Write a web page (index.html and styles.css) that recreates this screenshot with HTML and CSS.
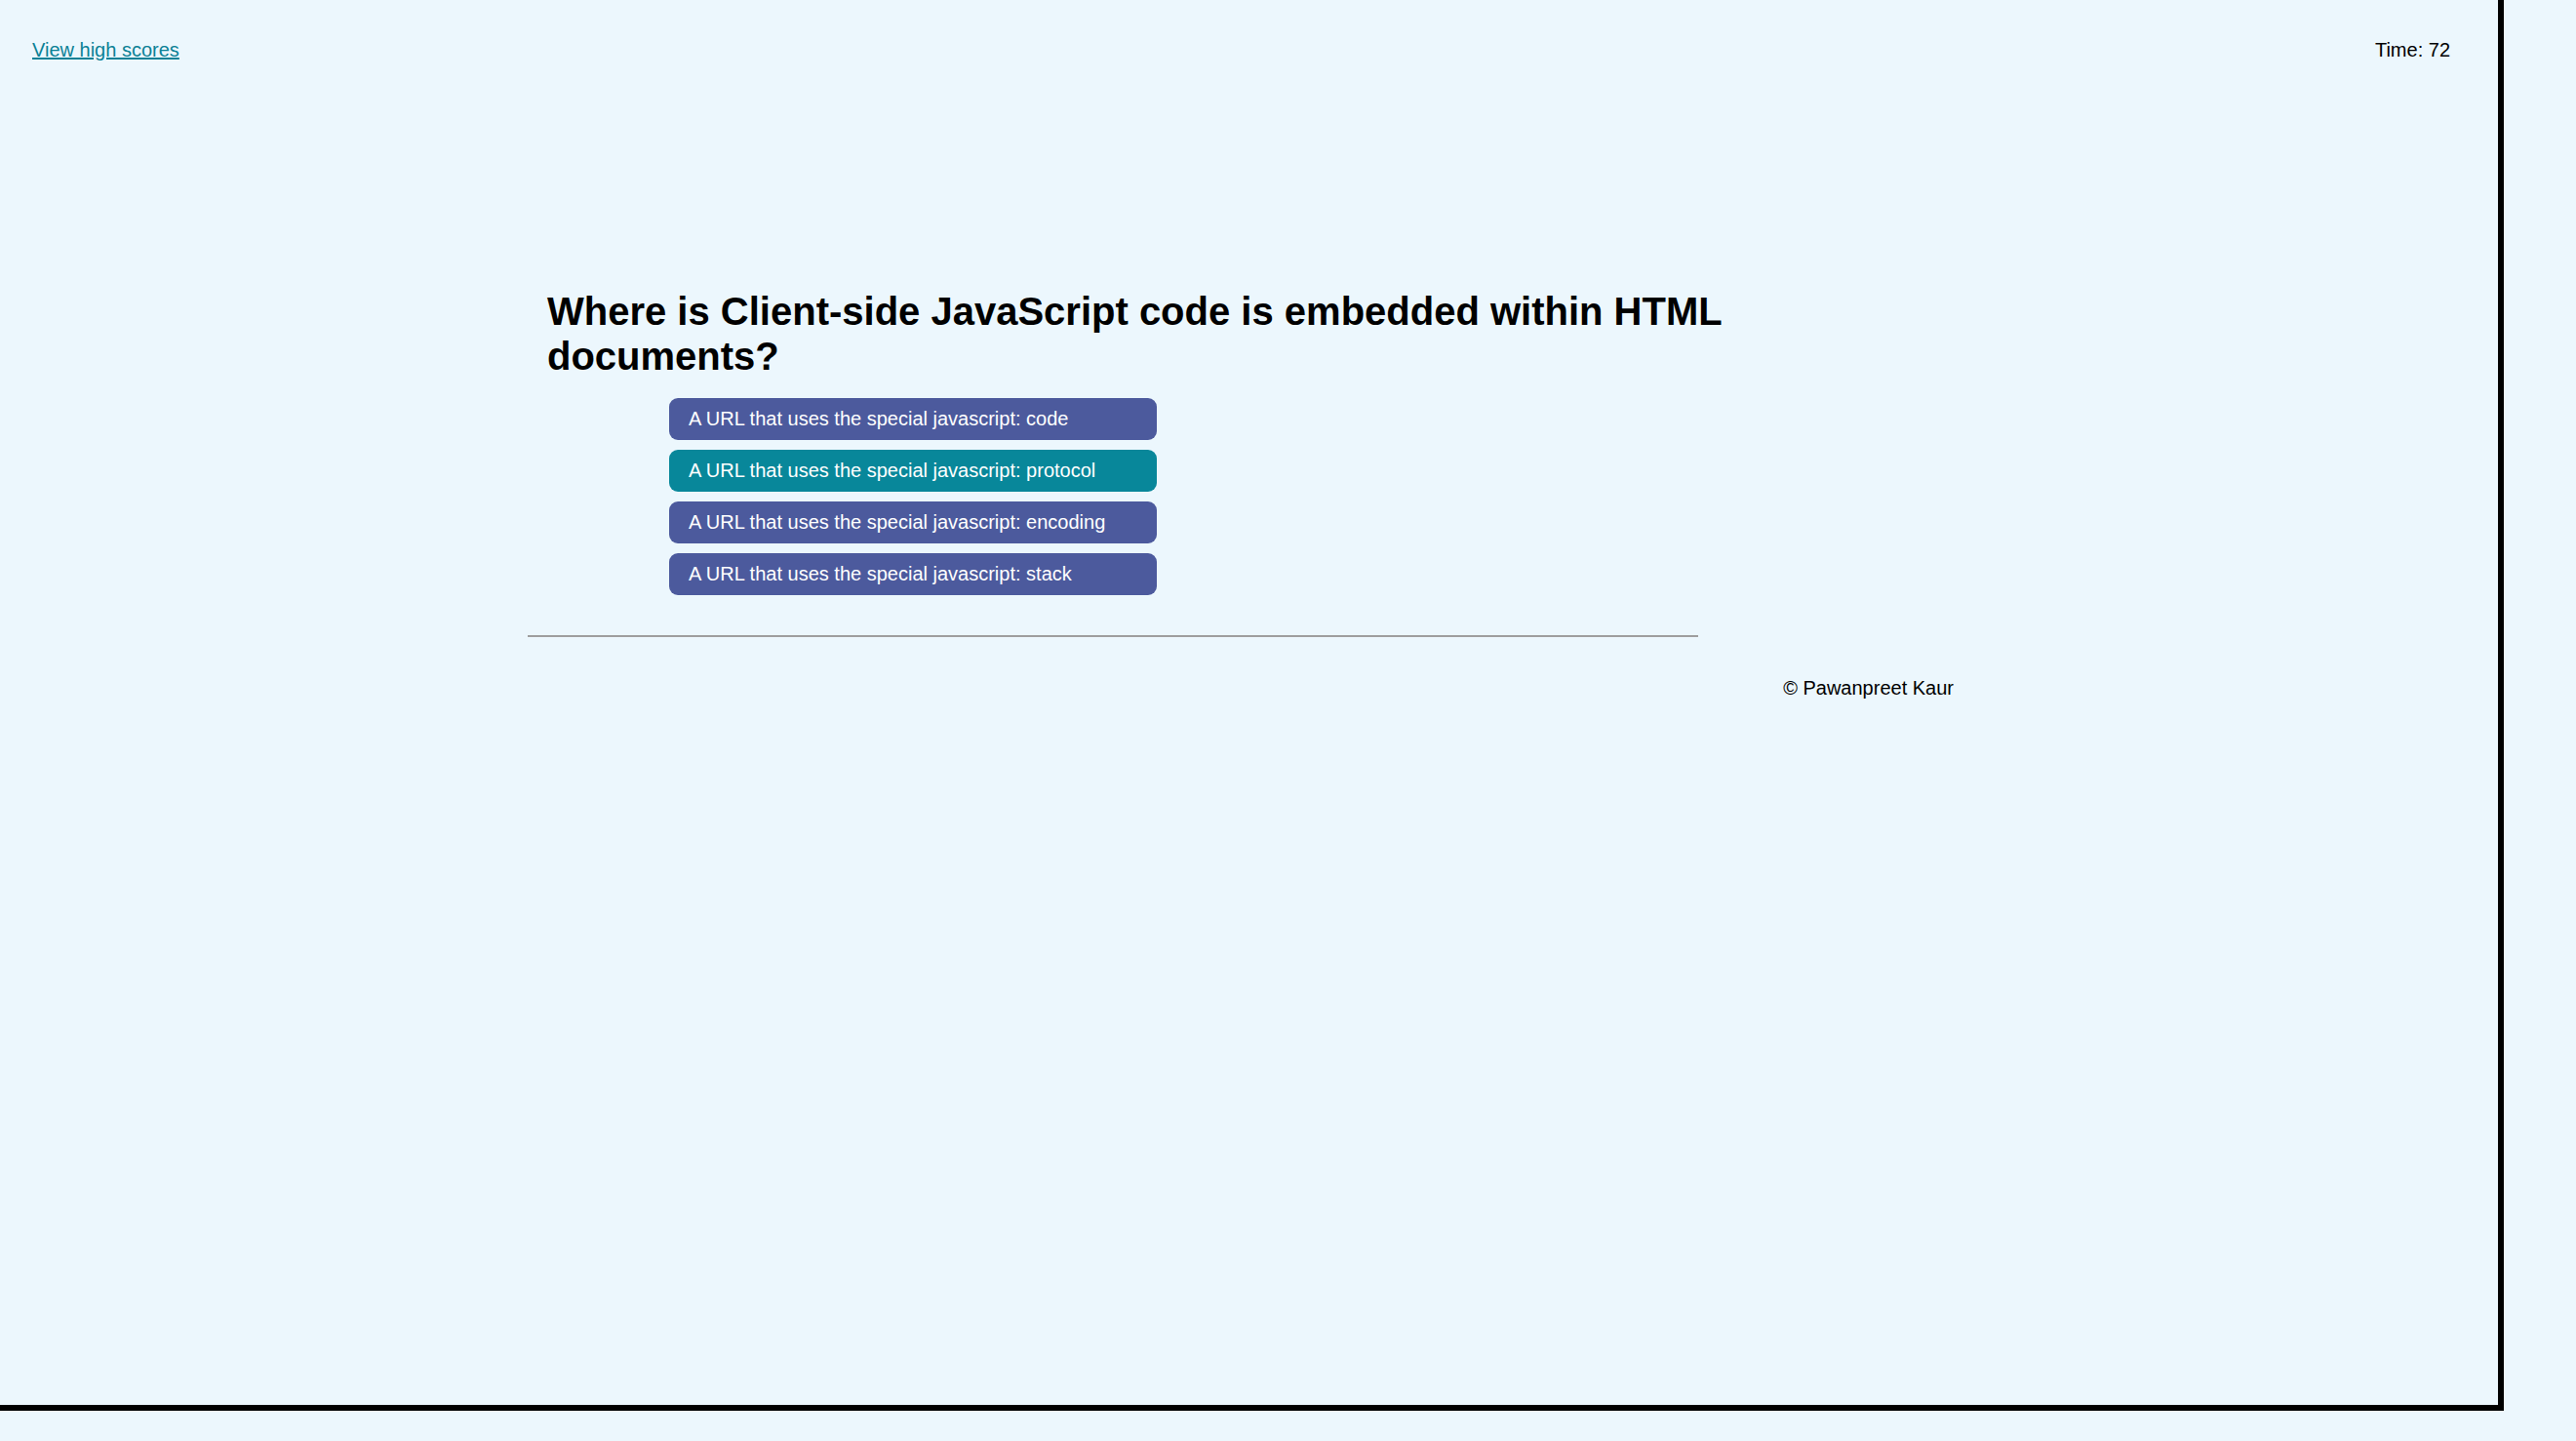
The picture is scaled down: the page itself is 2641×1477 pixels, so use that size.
FILE: index.html
```html
<!DOCTYPE html>
<html lang="en">
<head>
<meta charset="utf-8">
<title>Code Quiz</title>
<link rel="stylesheet" href="styles.css">
</head>
<body>
<div class="frame">
  <header class="top-bar">
    <a class="scores-link" href="#">View high scores</a>
    <div class="timer">Time: 72</div>
  </header>
  <main class="quiz">
    <h1 class="question">Where is Client-side JavaScript code is embedded within HTML documents?</h1>
    <div class="choices">
      <button class="choice">A URL that uses the special javascript: code</button>
      <button class="choice choice-active">A URL that uses the special javascript: protocol</button>
      <button class="choice">A URL that uses the special javascript: encoding</button>
      <button class="choice">A URL that uses the special javascript: stack</button>
    </div>
    <hr class="divider">
  </main>
  <footer class="footer">© Pawanpreet Kaur</footer>
</div>
</body>
</html>
```

FILE: styles.css
```css
html, body {
  margin: 0;
  padding: 0;
  background: #ecf7fd;
}

body {
  font-family: "Liberation Sans", Arial, Helvetica, sans-serif;
  font-size: 20px;
  color: #000;
}

.frame {
  width: 2561px;
  height: 1440px;
  border-right: 6px solid #000;
  border-bottom: 6px solid #000;
}

.top-bar {
  display: flex;
  justify-content: space-between;
  align-items: flex-start;
  padding: 40px 49px 0 33px;
  line-height: 23px;
}

.scores-link {
  color: #0b8196;
  text-decoration: underline;
}

.timer {
  color: #000;
}

.quiz {
  margin-left: 541px;
  width: 1480px;
  padding-top: 233px;
}

.question {
  margin: 0;
  padding-left: 20px;
  width: 1300px;
  font-size: 40px;
  font-weight: bold;
  line-height: 46px;
}

.choices {
  display: flex;
  flex-direction: column;
  gap: 10px;
  margin-top: 20px;
  margin-left: 145px;
  width: 500px;
}

.choice {
  display: block;
  width: 500px;
  height: 43px;
  padding: 0 20px;
  border: none;
  border-radius: 9px;
  background: #4c5a9d;
  color: #fff;
  font-family: "Liberation Sans", Arial, Helvetica, sans-serif;
  font-size: 20px;
  line-height: 23px;
  text-align: left;
  box-sizing: border-box;
}

.choice-active {
  background: #08879a;
}

.divider {
  width: 1200px;
  margin: 41px 0 0 0;
  border: none;
  border-top: 2px solid #9e9e9e;
  height: 0;
}

.footer {
  display: flex;
  justify-content: flex-end;
  padding-right: 558px;
  margin-top: 41px;
  line-height: 23px;
}
```
